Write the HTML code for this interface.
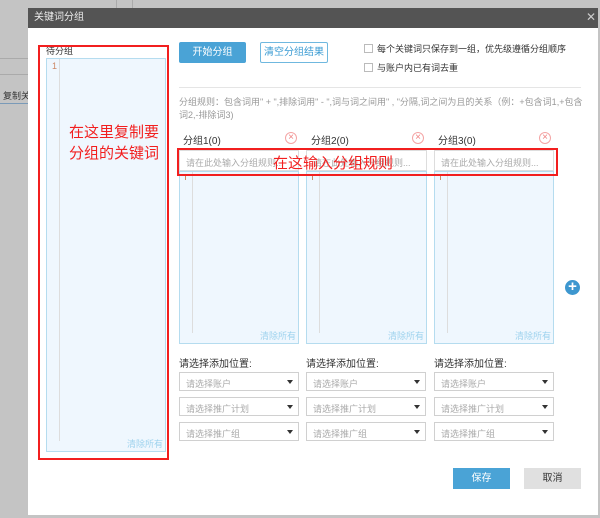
<!DOCTYPE html>
<html><head><meta charset="utf-8"><style>
*{margin:0;padding:0;box-sizing:border-box}
body{width:600px;height:518px;background:#c4c4c4;position:relative;overflow:hidden;font-family:"Liberation Sans","Noto Sans CJK SC",sans-serif;font-size:10px;color:#333}
.a{position:absolute}
.ta{position:absolute;background:#eff7fe;border:1px solid #b5dcef}
.gut{position:absolute;top:0;bottom:10px;width:1px;background:#ddd}
.clr{position:absolute;right:2px;bottom:1px;color:#9fd3ee;font-size:9px}
.inp{position:absolute;height:21px;border:1px solid #ddd;background:#fff;color:#aaa;font-size:9px;padding:5px 6px;white-space:nowrap;overflow:hidden}
.sel{position:absolute;width:120px;height:19px;border:1px solid #d0d0d0;background:#fff;color:#aaa;font-size:9px;padding:4px 6px}
.sel:after{content:"";position:absolute;right:5px;top:7px;border:3px solid transparent;border-top:4px solid #333}
.x{position:absolute;width:12px;height:12px;border:1px solid #f4a5a5;border-radius:50%;color:#f08080;font-size:10px;line-height:10px;text-align:center}
.cb{position:absolute;width:9px;height:9px;border:1px solid #bbb}
.red{position:absolute;border:2px solid #f21f1f}
.mk{position:absolute;left:5px;top:3px;width:1px;height:5px;background:#c86}
</style></head><body>
<div class="a" style="left:0;top:58px;width:28px;height:1px;background:#aaa"></div>
<div class="a" style="left:0;top:74px;width:28px;height:1px;background:#aaa"></div>
<div class="a" style="left:0;top:103px;width:28px;height:1px;background:#7a9ab8"></div>
<div class="a" style="left:3px;top:89px;font-size:9px;color:#333">复制关</div>
<div class="a" style="left:116px;top:0;width:1px;height:8px;background:#aaa"></div>
<div class="a" style="left:132px;top:0;width:1px;height:8px;background:#aaa"></div>
<div class="a" style="left:28px;top:8px;width:570px;height:507px;background:#fff"></div>
<div class="a" style="left:28px;top:8px;width:570px;height:20px;background:#545454;color:#eee;font-size:10px;padding:5px 6px;line-height:10px">关键词分组</div>
<div class="a" style="left:586px;top:11px;color:#ccc;font-size:12px;line-height:12px">✕</div>
<div class="a" style="left:46px;top:44px;font-size:9px">待分组</div>
<div class="ta" style="left:46px;top:58px;width:120px;height:394px"><div class="gut" style="left:12px"></div><div class="a" style="left:5px;top:2px;color:#c86;font-size:9px">1</div><div class="clr">清除所有</div></div>
<div class="red" style="left:38px;top:45px;width:131px;height:415px"></div>
<div class="a" style="left:69px;top:122px;color:#f21f1f;font-size:15px;line-height:21px">在这里复制要<br>分组的关键词</div>
<div class="a" style="left:179px;top:42px;width:67px;height:21px;background:#4aa3d6;border-radius:2px;color:#fff;text-align:center;line-height:21px">开始分组</div>
<div class="a" style="left:260px;top:42px;width:68px;height:21px;border:1px solid #6fb8df;border-radius:2px;color:#3a9bd3;text-align:center;line-height:19px">清空分组结果</div>
<div class="cb" style="left:364px;top:44px"></div><div class="a" style="left:377px;top:42px;font-size:9px">每个关键词只保存到一组，优先级遵循分组顺序</div>
<div class="cb" style="left:364px;top:63px"></div><div class="a" style="left:377px;top:61px;font-size:9px">与账户内已有词去重</div>
<div class="a" style="left:179px;top:87px;width:402px;height:1px;background:#e5e5e5"></div>
<div class="a" style="left:179px;top:96px;width:405px;color:#999;font-size:9px;line-height:13px">分组规则：包含词用" + ",排除词用" - ",词与词之间用" , "分隔,词之间为且的关系（例：+包含词1,+包含词2,-排除词3)</div>
<div class="a" style="left:183px;top:132px">分组1(0)</div><div class="x" style="left:285px;top:132px">×</div>
<div class="a" style="left:311px;top:132px">分组2(0)</div><div class="x" style="left:412px;top:132px">×</div>
<div class="a" style="left:438px;top:132px">分组3(0)</div><div class="x" style="left:539px;top:132px">×</div>
<div class="inp" style="left:179px;top:150px;width:120px">请在此处输入分组规则...</div>
<div class="inp" style="left:306px;top:150px;width:121px">请在此处输入分组规则...</div>
<div class="inp" style="left:434px;top:150px;width:120px">请在此处输入分组规则...</div>
<div class="ta" style="left:179px;top:171px;width:120px;height:173px"><div class="gut" style="left:12px"></div><div class="mk"></div><div class="clr">清除所有</div></div>
<div class="ta" style="left:306px;top:171px;width:121px;height:173px"><div class="gut" style="left:12px"></div><div class="mk"></div><div class="clr">清除所有</div></div>
<div class="ta" style="left:434px;top:171px;width:120px;height:173px"><div class="gut" style="left:12px"></div><div class="mk"></div><div class="clr">清除所有</div></div>
<div class="red" style="left:177px;top:148px;width:381px;height:28px"></div>
<div class="a" style="left:273px;top:152px;color:#f21f1f;font-size:15px">在这输入分组规则</div>
<div class="a" style="left:565px;top:280px;width:15px;height:15px;border-radius:50%;background:#3d97cf;color:#fff;font-size:15px;line-height:14px;text-align:center;font-weight:bold">+</div>
<div class="a" style="left:179px;top:355px">请选择添加位置:</div>
<div class="a" style="left:306px;top:355px">请选择添加位置:</div>
<div class="a" style="left:434px;top:355px">请选择添加位置:</div>
<div class="sel" style="left:179px;top:372px">请选择账户</div><div class="sel" style="left:306px;top:372px">请选择账户</div><div class="sel" style="left:434px;top:372px">请选择账户</div>
<div class="sel" style="left:179px;top:397px">请选择推广计划</div><div class="sel" style="left:306px;top:397px">请选择推广计划</div><div class="sel" style="left:434px;top:397px">请选择推广计划</div>
<div class="sel" style="left:179px;top:422px">请选择推广组</div><div class="sel" style="left:306px;top:422px">请选择推广组</div><div class="sel" style="left:434px;top:422px">请选择推广组</div>
<div class="a" style="left:453px;top:468px;width:57px;height:21px;background:#4aa3d6;color:#fff;text-align:center;line-height:21px">保存</div>
<div class="a" style="left:524px;top:468px;width:57px;height:21px;background:#e0e0e0;color:#333;text-align:center;line-height:21px">取消</div>
</body></html>
